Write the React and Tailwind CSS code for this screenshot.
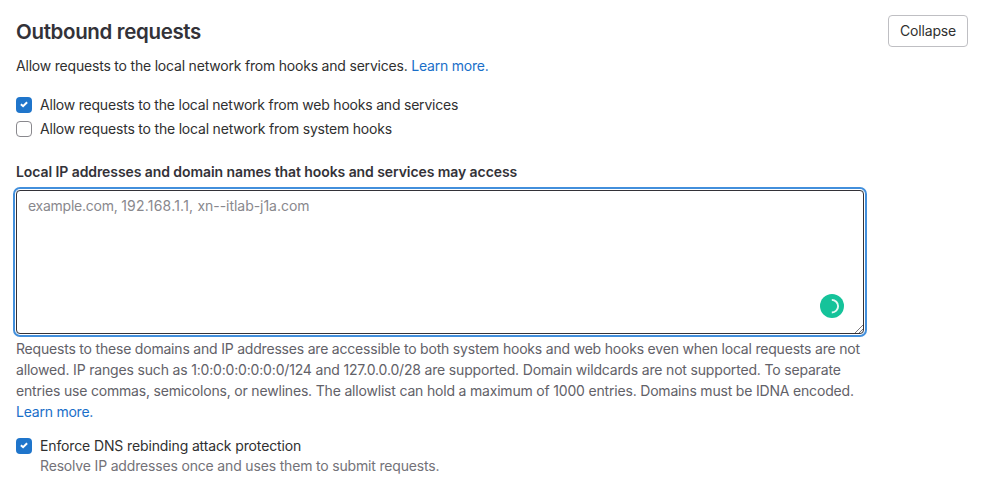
function Check({ checked }) {
  return (
    <span
      className={
        'flex size-4 shrink-0 items-center justify-center rounded-[4px] ' +
        (checked ? 'bg-[#1f75cb]' : 'border border-[#89888d] bg-white')
      }
    >
      {checked && (
        <svg viewBox="0 0 16 16" className="size-4" fill="none" stroke="#fff" strokeWidth="2">
          <path d="M4.9 7.2 7.1 9.2 11.1 5.3" />
        </svg>
      )}
    </span>
  );
}

function ResizeGrip() {
  return (
    <svg viewBox="0 0 9 9" className="absolute right-0 bottom-0 size-[9px]" stroke="#55545a" strokeWidth="0.8">
      <path d="M1 9 9 1M5 9 9 5" />
    </svg>
  );
}

export default function App() {
  return (
    <main className="h-[490px] w-[988px] overflow-hidden bg-white pt-[15px] pr-5 pl-4 font-[Inter,sans-serif] text-[14px] leading-[21px] tracking-[-0.2px] whitespace-nowrap text-[#303030]">
      <header className="flex h-8 items-center justify-between">
        <h2 className="pt-0.5 text-[20.5px] leading-8 font-semibold tracking-[-0.34px] text-[#333238]">
          Outbound requests
        </h2>
        <button className="h-8 w-20 rounded-[4px] border border-[#bfbfc3] pb-0.5 tracking-[-0.15px] text-[#303030]">
          Collapse
        </button>
      </header>
      <p className="mt-2 h-[21px]">
        <span>Allow requests to the local network from hooks and services.</span>{' '}
        <a className="tracking-[-0.23px] text-[#1a6fc9]">Learn more.</a>
      </p>
      <div className="mt-[18px] flex h-[21px] items-center gap-2">
        <Check checked />
        <span className="tracking-[-0.21px]">Allow requests to the local network from web hooks and services</span>
      </div>
      <div className="mt-[3px] flex h-[21px] items-center gap-2">
        <Check />
        <span>Allow requests to the local network from system hooks</span>
      </div>
      <p className="mt-[22px] h-[21px] font-semibold tracking-[-0.08px] text-[#333238]">
        Local IP addresses and domain names that hooks and services may access
      </p>
      <div className="relative mt-2 h-36 w-[848px] rounded-[4px] border border-[#333238] px-[11px] pt-1 text-[#89888d] shadow-[0_0_0_1px_#fff,0_0_0_3px_#428fdc]">
        <span className="tracking-[-0.25px]">example.com, </span>
        <span className="tracking-[0.22px]">192.168.1.1, </span>
        <span className="tracking-[-0.04px]">xn--itlab-j1a.com</span>
        <svg viewBox="0 0 24 24" className="absolute right-[19px] bottom-[15px] size-6" fill="none">
          <circle cx="12" cy="12" r="12" fill="#15c39a" />
          <path d="M11.8 5.9a6.3 6.3 0 0 1 0 12.6" stroke="#e6faf4" strokeWidth="1.9" />
        </svg>
        <ResizeGrip />
      </div>
      <div className="mt-1 flex flex-col items-start text-[#626168]">
        <span>Requests to these domains and IP addresses are accessible to both system hooks and web hooks even when local requests are not</span>
        <span className="tracking-[-0.175px]">allowed. IP ranges such as 1:0:0:0:0:0:0:0/124 and 127.0.0.0/28 are supported. Domain wildcards are not supported. To separate</span>
        <span className="tracking-[-0.187px]">entries use commas, semicolons, or newlines. The allowlist can hold a maximum of 1000 entries. Domains must be IDNA encoded.</span>
        <a className="tracking-[-0.23px] text-[#1a6fc9]">Learn more.</a>
      </div>
      <div className="mt-[13px] flex h-[21px] items-center gap-2">
        <Check checked />
        <span className="tracking-[-0.13px]">Enforce DNS rebinding attack protection</span>
      </div>
      <p className="-mt-px pl-6 tracking-[-0.17px] text-[#737278]">
        Resolve IP addresses once and uses them to submit requests.
      </p>
    </main>
  );
}
